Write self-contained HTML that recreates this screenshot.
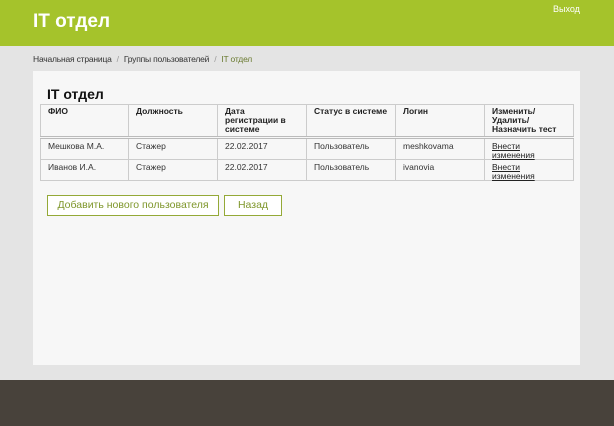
<!DOCTYPE html>
<html><head><meta charset="utf-8"><style>
*{box-sizing:border-box;margin:0;padding:0}
body{width:614px;height:426px;background:#e4e4e4;font-family:"Liberation Sans",sans-serif;position:relative;overflow:hidden;color:#222}
.hd{position:absolute;left:0;top:0;width:614px;height:46px;background:#a5c32b}
.hd h1{position:absolute;left:33px;top:11px;font-size:19px;color:#fff;font-weight:bold}
.hd .x{position:absolute;left:553px;top:4px;font-size:9px;color:#fff}
.bc{position:absolute;left:33px;top:54px;font-size:8.5px;color:#333;letter-spacing:-0.2px}
.bc span{color:#999;margin:0 5px}
.bc b{font-weight:normal;color:#6a7a30}
.pn{position:absolute;left:33px;top:71px;width:547px;height:294px;background:#f7f7f7}
.pn h2{position:absolute;left:14px;top:15px;font-size:14px;font-weight:bold;color:#111}
table{position:absolute;left:7px;top:33px;border-collapse:collapse;font-size:8.5px;table-layout:fixed;width:533px}
td,th{border:1px solid #ccc;vertical-align:top;text-align:left;padding:2px 7px;line-height:9px}
th{font-weight:bold;height:32px;border-bottom:3px double #bbb}
td{height:21px;padding-top:3px;padding-bottom:0;color:#333;line-height:8.5px}
a{color:#222;text-decoration:underline}
.bt{position:absolute;top:124px;height:21px;border:1.5px solid #94a937;background:#fff;color:#7e962a;font-size:10.5px;text-align:center;line-height:18px}
.ft{position:absolute;left:0;top:380px;width:614px;height:46px;background:#48423b}
</style></head><body>
<div class="hd"><h1>IT отдел</h1><div class="x">Выход</div></div>
<div class="bc">Начальная страница<span>/</span>Группы пользователей<span>/</span><b>IT отдел</b></div>
<div class="pn"><h2>IT отдел</h2>
<table><colgroup><col style="width:88px"><col style="width:89px"><col style="width:89px"><col style="width:89px"><col style="width:89px"><col style="width:89px"></colgroup>
<tr><th>ФИО</th><th>Должность</th><th>Дата регистрации в системе</th><th>Статус в системе</th><th>Логин</th><th>Изменить/ Удалить/ Назначить тест</th></tr>
<tr><td>Мешкова М.А.</td><td>Стажер</td><td>22.02.2017</td><td>Пользователь</td><td>meshkovama</td><td><a>Внести<br>изменения</a></td></tr>
<tr><td>Иванов И.А.</td><td>Стажер</td><td>22.02.2017</td><td>Пользователь</td><td>ivanovia</td><td><a>Внести<br>изменения</a></td></tr>
</table>
<div class="bt" style="left:14px;width:172px">Добавить нового пользователя</div>
<div class="bt" style="left:191px;width:58px">Назад</div>
</div>
<div class="ft"></div>
</body></html>
